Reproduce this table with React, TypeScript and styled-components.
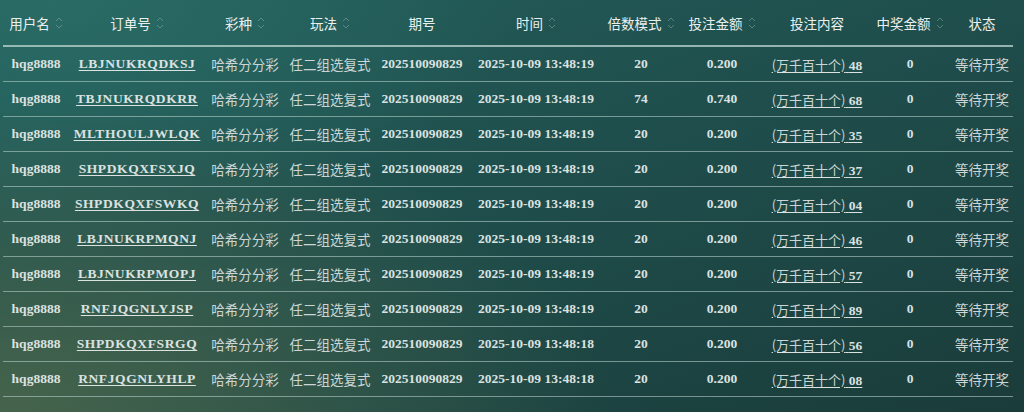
import React from "react";
import styled, { createGlobalStyle } from "styled-components";

const GlobalStyle = createGlobalStyle`
	html, body {
		margin: 0;
		padding: 0;
	}
	body {
		font-family: "Liberation Serif", "Noto Sans CJK SC", serif;
	}
`;

const COLUMNS = "66px 136px 80px 90px 94px 134px 76px 86px 104px 82px 62px";

const Page = styled.div`
	width: 1024px;
	height: 412px;
	box-sizing: border-box;
	padding-left: 3px;
	overflow: hidden;
	background:
		radial-gradient(ellipse 60% 75% at 0% 100%, rgba(70, 100, 76, 1), rgba(70, 100, 76, 0) 100%),
		radial-gradient(ellipse 45% 60% at 5% 0%, rgba(42, 108, 102, 0.9), rgba(42, 108, 102, 0) 100%),
		linear-gradient(160deg, #24605c 0%, #1f4f4d 45%, #1a3c3a 100%);
`;

const Table = styled.div`
	width: 1010px;
	display: flex;
	flex-direction: column;
`;

const HeaderRow = styled.div`
	display: grid;
	grid-template-columns: ${COLUMNS};
	height: 45px;
	border-bottom: 2px solid rgba(190, 214, 208, 0.75);
`;

const HeaderCell = styled.div`
	display: flex;
	align-items: center;
	justify-content: center;
	gap: 5px;
	font-family: "Noto Sans CJK SC", "Noto Sans", sans-serif;
	font-size: 13.5px;
	color: #eaf0ef;
	white-space: nowrap;
`;

const Row = styled.div`
	display: grid;
	grid-template-columns: ${COLUMNS};
	height: 34px;
	border-bottom: 1px solid rgba(180, 205, 200, 0.6);
`;

const Cell = styled.div<{ $cjk?: boolean }>`
	display: flex;
	align-items: center;
	justify-content: center;
	white-space: nowrap;
	font-size: 13.5px;
	color: ${(p) => (p.$cjk ? "#cdd6d4" : "#dbe2e0")};
	font-family: ${(p) =>
		p.$cjk
			? `"Noto Sans CJK SC", "Noto Sans", sans-serif`
			: `"Liberation Serif", "Noto Sans CJK SC", serif`};
	font-weight: ${(p) => (p.$cjk ? 400 : 700)};
`;

const Link = styled.span<{ $spaced?: boolean }>`
	text-decoration: underline;
	text-underline-offset: 2px;
	letter-spacing: ${(p) => (p.$spaced ? "0.6px" : "0")};
`;

const CjkPart = styled.span`
	font-family: "Noto Sans CJK SC", "Noto Sans", sans-serif;
	font-weight: 400;
	font-size: 13px;
	color: #cdd6d4;
`;

const SortIcon = () => (
	<svg width="8" height="14" viewBox="0 0 8 14" fill="none">
		<path d="M1 5 L4 2 L7 5" stroke="rgba(160,188,184,0.45)" strokeWidth="1" />
		<path d="M1 9 L4 12 L7 9" stroke="rgba(160,188,184,0.45)" strokeWidth="1" />
	</svg>
);

interface Bet {
	order: string;
	multiple: number;
	amount: string;
	code: string;
	time: string;
}

const bets: Bet[] = [
	{ order: "LBJNUKRQDKSJ", multiple: 20, amount: "0.200", code: "48", time: "2025-10-09 13:48:19" },
	{ order: "TBJNUKRQDKRR", multiple: 74, amount: "0.740", code: "68", time: "2025-10-09 13:48:19" },
	{ order: "MLTHOULJWLQK", multiple: 20, amount: "0.200", code: "35", time: "2025-10-09 13:48:19" },
	{ order: "SHPDKQXFSXJQ", multiple: 20, amount: "0.200", code: "37", time: "2025-10-09 13:48:19" },
	{ order: "SHPDKQXFSWKQ", multiple: 20, amount: "0.200", code: "04", time: "2025-10-09 13:48:19" },
	{ order: "LBJNUKRPMQNJ", multiple: 20, amount: "0.200", code: "46", time: "2025-10-09 13:48:19" },
	{ order: "LBJNUKRPMOPJ", multiple: 20, amount: "0.200", code: "57", time: "2025-10-09 13:48:19" },
	{ order: "RNFJQGNLYJSP", multiple: 20, amount: "0.200", code: "89", time: "2025-10-09 13:48:19" },
	{ order: "SHPDKQXFSRGQ", multiple: 20, amount: "0.200", code: "56", time: "2025-10-09 13:48:18" },
	{ order: "RNFJQGNLYHLP", multiple: 20, amount: "0.200", code: "08", time: "2025-10-09 13:48:18" },
];

const headers: { label: string; sortable: boolean }[] = [
	{ label: "用户名", sortable: true },
	{ label: "订单号", sortable: true },
	{ label: "彩种", sortable: true },
	{ label: "玩法", sortable: true },
	{ label: "期号", sortable: false },
	{ label: "时间", sortable: true },
	{ label: "倍数模式", sortable: true },
	{ label: "投注金额", sortable: true },
	{ label: "投注内容", sortable: false },
	{ label: "中奖金额", sortable: true },
	{ label: "状态", sortable: false },
];

const App: React.FC = (): React.ReactElement => {
	return (
		<>
			<GlobalStyle />
			<Page>
				<Table>
					<HeaderRow>
						{headers.map((h) => (
							<HeaderCell key={h.label}>
								{h.label}
								{h.sortable && <SortIcon />}
							</HeaderCell>
						))}
					</HeaderRow>
					{bets.map((bet) => (
						<Row key={bet.order}>
							<Cell>hqg8888</Cell>
							<Cell>
								<Link $spaced>{bet.order}</Link>
							</Cell>
							<Cell $cjk>哈希分分彩</Cell>
							<Cell $cjk>任二组选复式</Cell>
							<Cell>202510090829</Cell>
							<Cell>{bet.time}</Cell>
							<Cell>{bet.multiple}</Cell>
							<Cell>{bet.amount}</Cell>
							<Cell>
								<Link>
									<CjkPart>(万千百十个)</CjkPart> {bet.code}
								</Link>
							</Cell>
							<Cell>0</Cell>
							<Cell $cjk>等待开奖</Cell>
						</Row>
					))}
				</Table>
			</Page>
		</>
	);
};

export default App;
